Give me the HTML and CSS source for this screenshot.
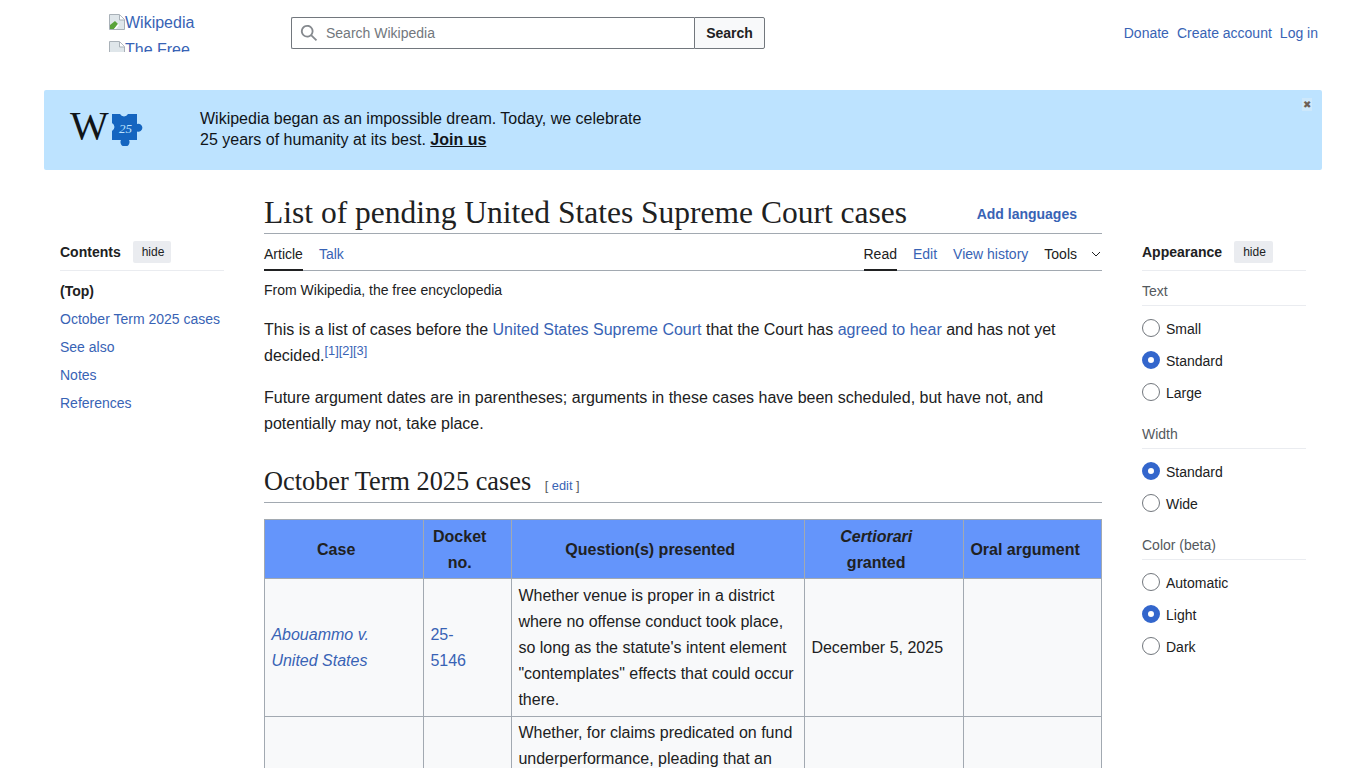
FILE: index.html
```html
<!DOCTYPE html>
<html lang="en">
<head>
    <meta charset="UTF-8">
    <meta name="viewport" content="width=device-width, initial-scale=1.0">
    <title>List of pending United States Supreme Court cases - Wikipedia</title>
    <link rel="stylesheet" href="styles.css">
</head>
<body>
    <header class="header">
        <div class="logo">
            <a class="logo-line" href="#">
                <svg class="broken" width="16" height="16" viewBox="0 0 16 16"><path d="M.5.5h10l5 5v10H.5z" fill="#dfe6ea" stroke="#a9b1b8"/><path d="M1 15V11l5-4 3 3-4 5z" fill="#5aa33a"/><path d="M5 15l4-5 1 1-3 4z" fill="#fff"/><path d="M10.5 1v5h5" fill="#fff" stroke="#a9b1b8"/></svg>Wikipedia
            </a>
            <a class="logo-line" href="#">
                <svg class="broken" width="16" height="16" viewBox="0 0 16 16"><path d="M.5.5h10l5 5v10H.5z" fill="#dfe6ea" stroke="#a9b1b8"/><path d="M10.5 1v5h5" fill="#fff" stroke="#a9b1b8"/></svg>The Free
            </a>
        </div>
        <form class="search">
            <div class="search-box">
                <svg width="18" height="18" viewBox="0 0 20 20"><path d="M12.2 13.6a7 7 0 1 1 1.4-1.4l5.4 5.4-1.4 1.4zM3 8a5 5 0 1 0 10 0A5 5 0 0 0 3 8" fill="#85898e"/></svg>
                <span>Search Wikipedia</span>
            </div>
            <button type="button" class="search-btn">Search</button>
        </form>
        <nav class="user-links">
            <a href="#">Donate</a>
            <a href="#">Create account</a>
            <a href="#">Log in</a>
        </nav>
    </header>

    <div class="banner">
        <div class="banner-logo">
            <span class="banner-w">W</span>
            <svg class="puzzle" width="32" height="32" viewBox="0 0 32 32">
                <path d="M0 0h8a4.5 4.5 0 0 0 8 0h9v10a4 4 0 1 1 0 7.5V26h-8a4.5 4.5 0 1 1-8 0H0v-9a4.5 4.5 0 0 0 0-8z" fill="#1565c0"/>
                <text x="7" y="19" class="puzzle-num">25</text>
            </svg>
        </div>
        <p class="banner-text">Wikipedia began as an impossible dream. Today, we celebrate<br>25 years of humanity at its best. <a href="#">Join us</a></p>
        <span class="banner-close">&#10006;</span>
    </div>

    <div class="page">
        <aside class="toc">
            <div class="side-head">
                <strong>Contents</strong>
                <span class="hide-btn">hide</span>
            </div>
            <ul class="toc-list">
                <li class="toc-top">(Top)</li>
                <li><a href="#">October Term 2025 cases</a></li>
                <li><a href="#">See also</a></li>
                <li><a href="#">Notes</a></li>
                <li><a href="#">References</a></li>
            </ul>
        </aside>

        <main class="content">
            <div class="title-row">
                <h1>List of pending United States Supreme Court cases</h1>
                <a class="add-lang" href="#">Add languages</a>
            </div>
            <div class="tabs">
                <div class="tab-group">
                    <a class="tab active" href="#">Article</a>
                    <a class="tab" href="#">Talk</a>
                </div>
                <div class="tab-group">
                    <a class="tab active" href="#">Read</a>
                    <a class="tab" href="#">Edit</a>
                    <a class="tab" href="#">View history</a>
                    <span class="tab tools">Tools
                        <svg width="10" height="6" viewBox="0 0 10 6"><path d="M1 1l4 4 4-4" fill="none" stroke="#202122"/></svg>
                    </span>
                </div>
            </div>
            <p class="from">From Wikipedia, the free encyclopedia</p>
            <p>This is a list of cases before the <a href="#">United States Supreme Court</a> that the Court has <a href="#">agreed to hear</a> and has not yet decided.<sup><a href="#">[1]</a><a href="#">[2]</a><a href="#">[3]</a></sup></p>
            <p>Future argument dates are in parentheses; arguments in these cases have been scheduled, but have not, and potentially may not, take place.</p>

            <h2>October Term 2025 cases <span class="edit-link">[ <a href="#">edit</a> ]</span></h2>

            <table class="cases">
                <colgroup>
                    <col class="c-case"><col class="c-docket"><col class="c-question"><col class="c-cert"><col class="c-oral">
                </colgroup>
                <tr>
                    <th>Case</th>
                    <th>Docket no.</th>
                    <th>Question(s) presented</th>
                    <th><i>Certiorari</i> granted</th>
                    <th class="nowrap">Oral argument</th>
                </tr>
                <tr>
                    <td><i><a href="#">Abouammo v. United States</a></i></td>
                    <td><a href="#">25-<br>5146</a></td>
                    <td>Whether venue is proper in a district where no offense conduct took place, so long as the statute's intent element "contemplates" effects that could occur there.</td>
                    <td>December 5, 2025</td>
                    <td></td>
                </tr>
                <tr>
                    <td></td>
                    <td></td>
                    <td>Whether, for claims predicated on fund underperformance, pleading that an</td>
                    <td></td>
                    <td></td>
                </tr>
            </table>
        </main>

        <aside class="appearance">
            <div class="side-head">
                <strong>Appearance</strong>
                <span class="hide-btn">hide</span>
            </div>
            <div class="app-group">
                <div class="app-label">Text</div>
                <label class="radio"><span class="dot"></span>Small</label>
                <label class="radio"><span class="dot on"></span>Standard</label>
                <label class="radio"><span class="dot"></span>Large</label>
            </div>
            <div class="app-group">
                <div class="app-label">Width</div>
                <label class="radio"><span class="dot on"></span>Standard</label>
                <label class="radio"><span class="dot"></span>Wide</label>
            </div>
            <div class="app-group">
                <div class="app-label">Color (beta)</div>
                <label class="radio"><span class="dot"></span>Automatic</label>
                <label class="radio"><span class="dot on"></span>Light</label>
                <label class="radio"><span class="dot"></span>Dark</label>
            </div>
        </aside>
    </div>
</body>
</html>
```

FILE: styles.css
```css
body {
    font-family: "Liberation Sans", Arial, sans-serif;
    font-size: 16px;
    color: #202122;
    background-color: #fff;
    margin: 0;
    overflow: hidden;
    height: 768px;
}

a {
    color: #3863b5;
    text-decoration: none;
}

/* Header */
.header {
    display: flex;
    align-items: flex-start;
    height: 90px;
    padding: 0 48px 0 109px;
}

.logo {
    width: 182px;
    height: 38px;
    margin-top: 14px;
    overflow: hidden;
}

.logo-line {
    display: block;
    height: 27px;
    line-height: 18px;
    white-space: nowrap;
}

.broken {
    vertical-align: -2px;
}

.search {
    display: flex;
    width: 474px;
    height: 32px;
    margin-top: 17px;
}

.search-box {
    flex: 1;
    display: flex;
    align-items: center;
    gap: 8px;
    padding-left: 8px;
    border: 1px solid #72777d;
    border-right: none;
    border-radius: 2px 0 0 2px;
    font-size: 14px;
    color: #72777d;
}

.search-btn {
    width: 71px;
    border: 1px solid #72777d;
    border-radius: 0 2px 2px 0;
    background-color: #f8f9fa;
    color: #202122;
    font-family: inherit;
    font-size: 14px;
    font-weight: bold;
    padding: 0;
}

.user-links {
    margin-left: auto;
    margin-top: 25px;
    display: flex;
    gap: 8px;
    font-size: 14px;
    line-height: 16px;
}

/* Banner */
.banner {
    position: relative;
    display: flex;
    align-items: center;
    height: 80px;
    margin: 0 44px;
    background-color: #bde3ff;
    border-radius: 2px;
}

.banner-logo {
    display: flex;
    align-items: center;
    width: 156px;
    padding-left: 26px;
    box-sizing: border-box;
}

.banner-w {
    font-family: "Liberation Serif", serif;
    font-size: 41px;
    line-height: 40px;
    margin-bottom: 10px;
    color: #101418;
}

.puzzle {
    margin-left: 3px;
}

.puzzle-num {
    font-family: "Liberation Serif", serif;
    font-style: italic;
    font-size: 13px;
    fill: #bde3ff;
}

.banner-text {
    margin: 0;
    padding-bottom: 2px;
    line-height: 21.5px;
    color: #101418;
}

.banner-text a {
    color: #101418;
    font-weight: bold;
    text-decoration: underline;
}

.banner-close {
    position: absolute;
    top: 8px;
    right: 10px;
    padding: 0 1px;
    font-size: 10px;
    line-height: 13px;
    color: #6b5f55;
    background-color: #cde8fb;
}

/* Three columns */
.page {
    display: grid;
    grid-template-columns: 164px 838px 164px;
    column-gap: 40px;
    padding-left: 60px;
}

.side-head {
    display: flex;
    align-items: center;
    gap: 12px;
    height: 30px;
    border-bottom: 1px solid #eaecf0;
    font-size: 14px;
    padding-bottom: 3px;
}

.hide-btn {
    background-color: #eaecf0;
    border-radius: 2px;
    font-size: 12px;
    line-height: 22px;
    padding: 0 7px 0 9px;
}

.toc,
.appearance {
    padding-top: 67px;
}

.toc-list {
    list-style: none;
    margin: 6px 0 0;
    padding: 0;
    font-size: 14px;
}

.toc-list li {
    height: 28px;
    line-height: 28px;
}

.toc-top {
    font-weight: bold;
}

/* Article */
.content {
    min-width: 0;
}

.title-row {
    display: flex;
    justify-content: space-between;
    align-items: center;
    height: 64px;
    padding-right: 25px;
    padding-top: 1px;
    box-sizing: border-box;
    border-bottom: 1px solid #a2a9b1;
}

h1 {
    margin: 22px 0 0;
    font-family: "Liberation Serif", serif;
    font-weight: normal;
    font-size: 31.5px;
    line-height: 38px;
    color: #202122;
}

.add-lang {
    margin-top: 24px;
    font-size: 14px;
    font-weight: bold;
}

.tabs {
    display: flex;
    justify-content: space-between;
    height: 36px;
    border-bottom: 1px solid #a2a9b1;
    font-size: 14px;
}

.tab-group {
    display: flex;
    gap: 16px;
}

.tab {
    display: block;
    height: 37px;
    line-height: 41px;
    box-sizing: border-box;
}

.tab.active {
    color: #202122;
    border-bottom: 2px solid #202122;
}

.tools {
    display: flex;
    gap: 14px;
    align-items: center;
    padding: 3px 2px 0 0;
}

.tools svg {
    margin-right: -1px;
}

.from {
    font-size: 14px;
    line-height: 16px;
    margin: 11px 0 19px;
}

p {
    line-height: 26px;
    margin: 0 0 16px;
}

sup {
    font-size: 12.8px;
    line-height: 0;
}

h2 {
    margin: 27px 0 16px;
    padding-bottom: 2px;
    border-bottom: 1px solid #a2a9b1;
    font-family: "Liberation Serif", serif;
    font-weight: normal;
    font-size: 26.3px;
    line-height: 36px;
    color: #202122;
}

.edit-link {
    font-family: "Liberation Sans", Arial, sans-serif;
    font-size: 12.8px;
    line-height: 1;
    margin-left: 7px;
    color: #54595d;
}

/* Table */
.cases {
    width: 837px;
    table-layout: fixed;
    border-collapse: collapse;
    background-color: #f8f9fa;
    line-height: 26px;
}

.c-case { width: 159px; }
.c-docket { width: 88px; }
.c-question { width: 293px; }
.c-cert { width: 159px; }
.c-oral { width: 138px; }

.cases th,
.cases td {
    border: 1px solid #a2a9b1;
    padding: 3.2px 6.4px;
}

.cases th {
    background-color: #6495fb;
    text-align: center;
    color: #202122;
    padding: 4px 22px 2.4px 6.4px;
}

.cases th.nowrap {
    white-space: nowrap;
}

/* Appearance */
.app-group {
    margin-bottom: 5px;
}

.app-label {
    height: 35px;
    line-height: 40px;
    margin-bottom: 7px;
    border-bottom: 1px solid #eaecf0;
    font-size: 14px;
    color: #54595d;
    box-sizing: border-box;
}

.radio {
    display: flex;
    align-items: center;
    gap: 6px;
    height: 32px;
    font-size: 14px;
}

.dot {
    width: 18px;
    height: 18px;
    margin-bottom: 2px;
    box-sizing: border-box;
    border: 1px solid #72777d;
    border-radius: 50%;
}

.dot.on {
    border: 6px solid #3366cc;
}
```
